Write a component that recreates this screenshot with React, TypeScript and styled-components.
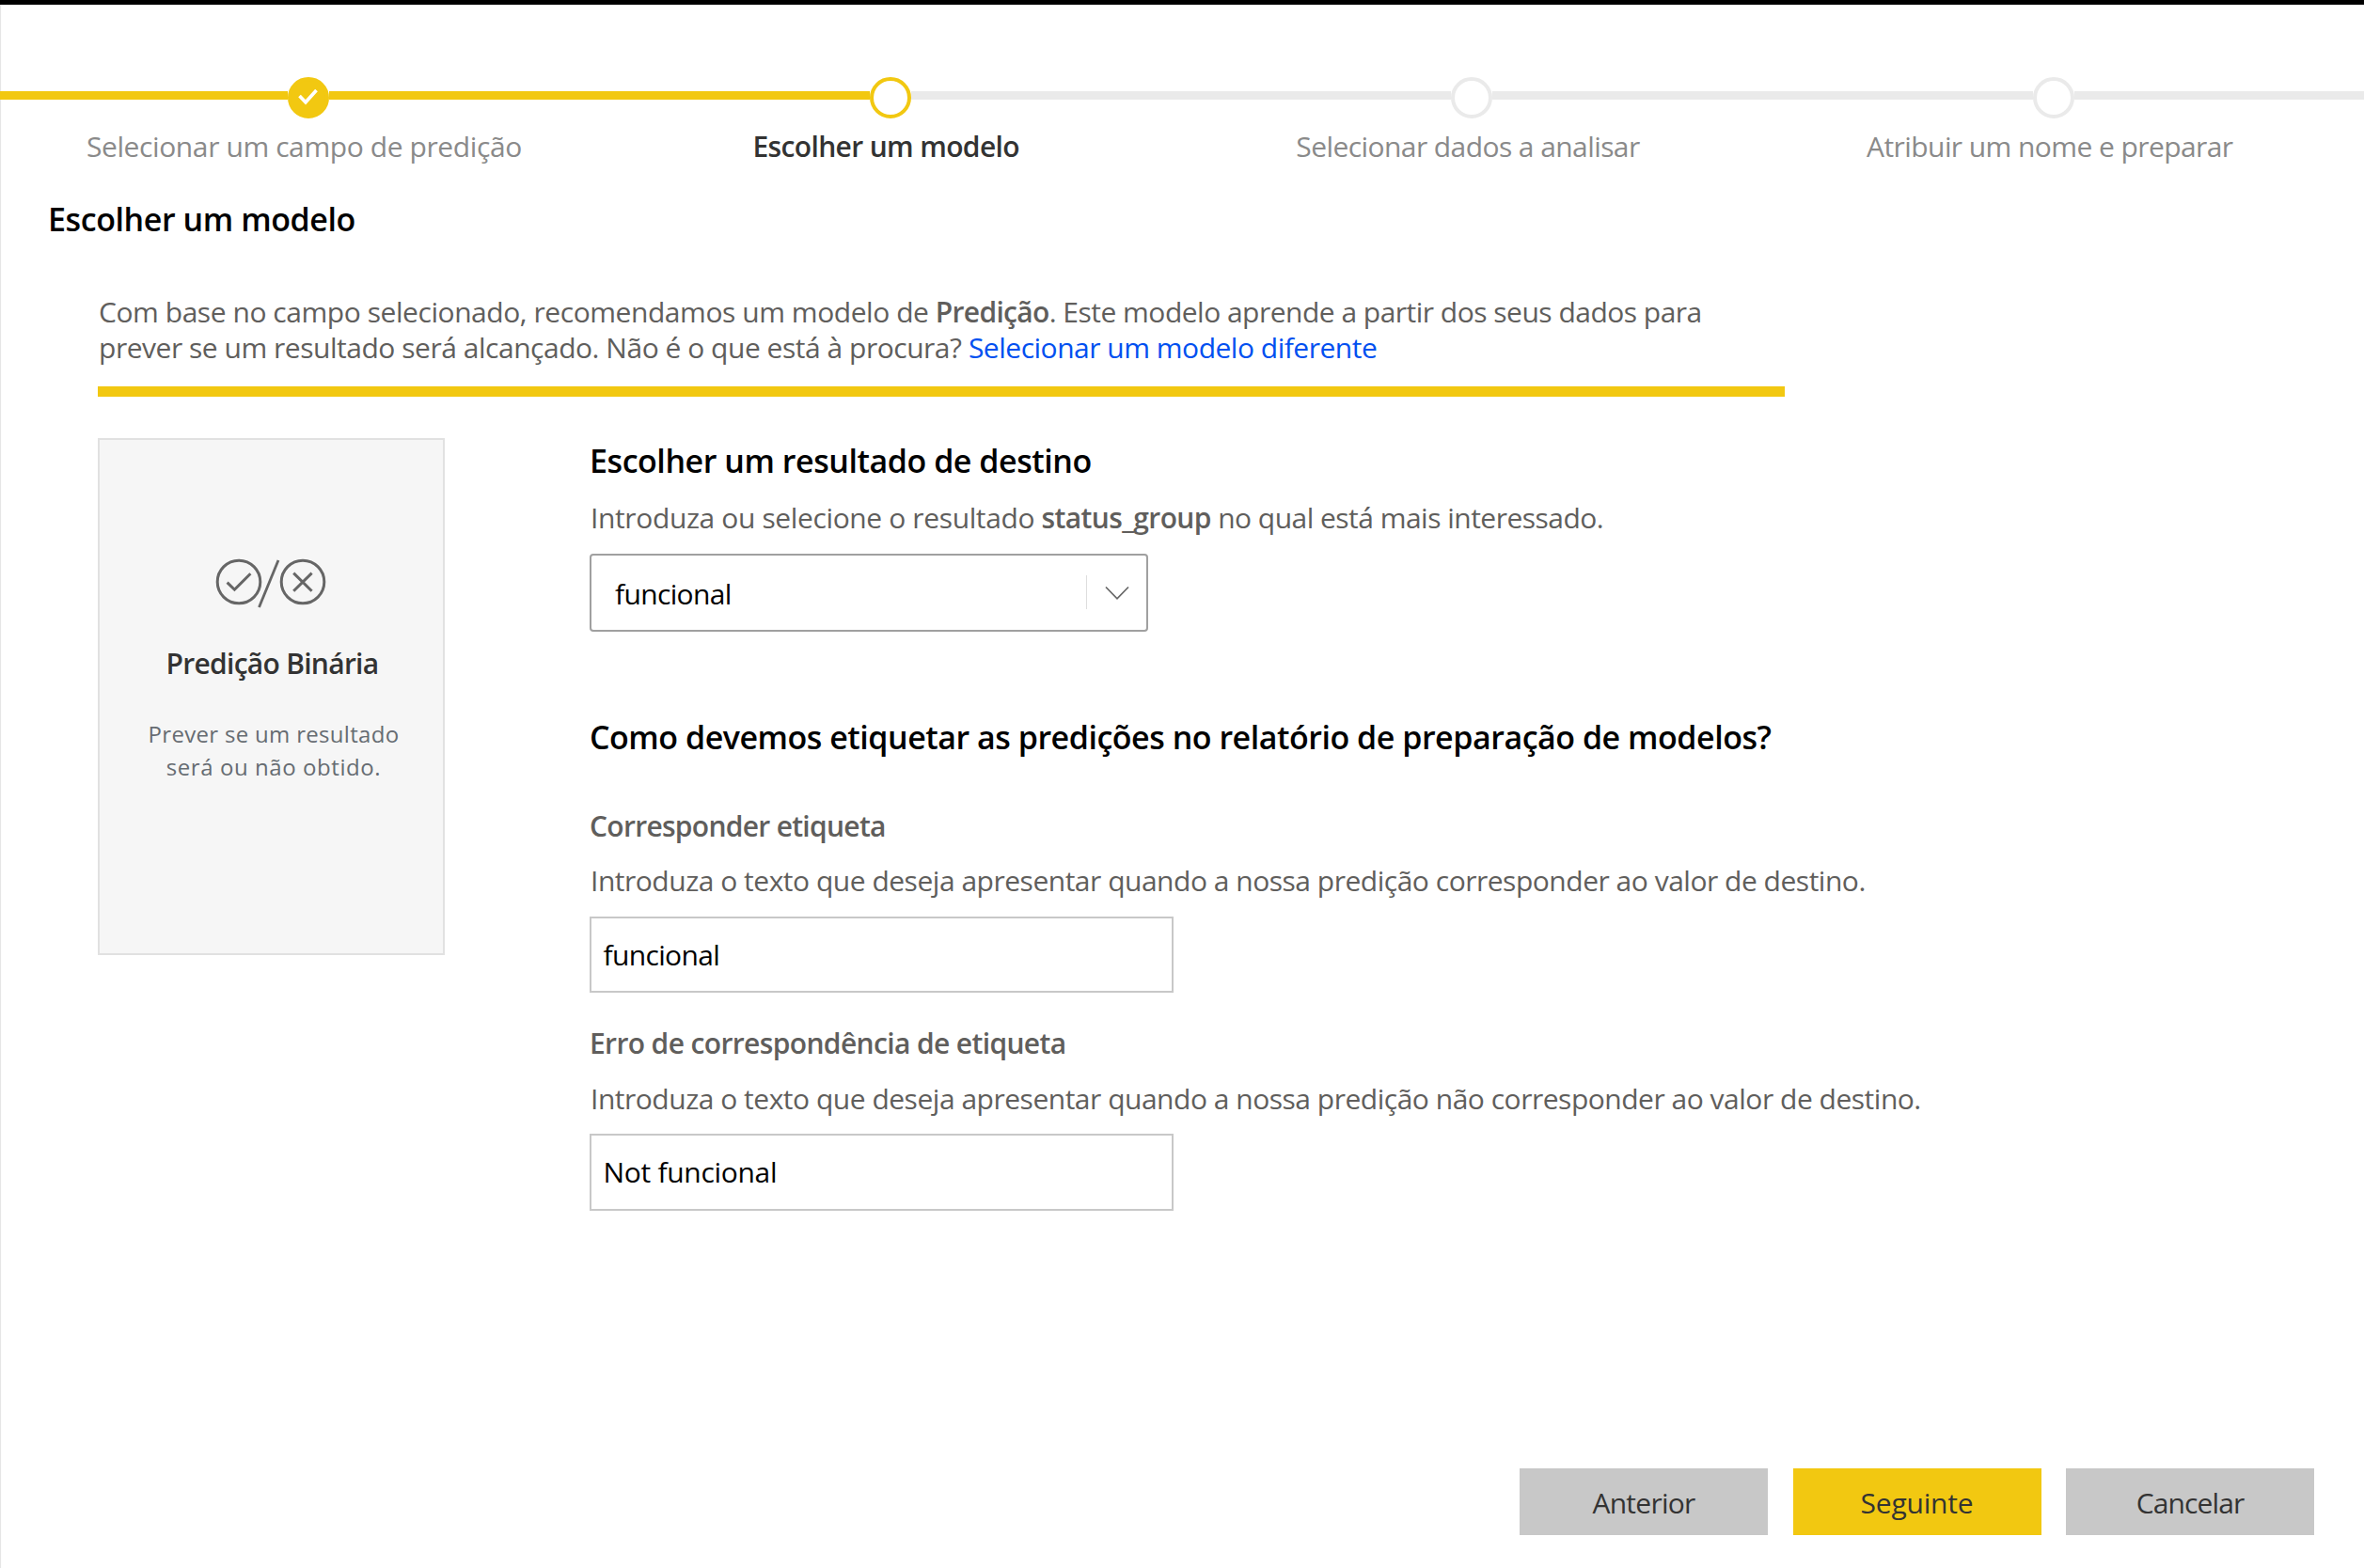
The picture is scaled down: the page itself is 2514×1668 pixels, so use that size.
import React from "react";
import styled, { createGlobalStyle } from "styled-components";

const color = {
  accent: "#f2c811",
  track: "#eaeaea",
  text: "#605e5c",
  strong: "#333333",
  muted: "#8a8a8a",
  link: "#0050f0",
  button: "#c8c8c8",
};

const GlobalStyle = createGlobalStyle`
  *, *::before, *::after { box-sizing: border-box; }
  body {
    margin: 0;
    background: #ffffff;
    font-family: "Open Sans", "Noto Sans", sans-serif;
  }
  h1, h2, h3, p { margin: 0; }
`;

type Tracked = { $track?: number };

const Page = styled.div`
  display: flex;
  flex-direction: column;
  width: 2514px;
  height: 1668px;
  border-top: 5px solid #000000;
  background: #ffffff;
  box-shadow: inset 2px 0 1px -1px #e4e4e4;
`;

const Stepper = styled.nav`
  padding-top: 77px;
`;

const StepTrack = styled.div`
  display: flex;
  align-items: center;
  height: 44px;
`;

const StepLine = styled.span<{ $done?: boolean; $width?: number }>`
  flex: ${(p) => (p.$width ? `0 0 ${p.$width}px` : "1 1 0")};
  height: 9px;
  margin-bottom: 5px;
  background: ${(p) => (p.$done ? color.accent : color.track)};
`;

const StepDot = styled.span<{ $state: StepState }>`
  display: flex;
  align-items: center;
  justify-content: center;
  flex: 0 0 44px;
  height: 44px;
  border-radius: 50%;
  border: 4px solid ${(p) => (p.$state === "todo" ? color.track : color.accent)};
  background: ${(p) => (p.$state === "done" ? color.accent : "#ffffff")};
`;

const StepLabels = styled.div`
  display: grid;
  grid-template-columns: repeat(4, 618.8px);
  margin: 10px 0 0 14px;
`;

const StepLabel = styled.span<Tracked & { $current: boolean }>`
  font-size: 30px;
  line-height: 40px;
  text-align: center;
  font-weight: ${(p) => (p.$current ? 600 : 400)};
  color: ${(p) => (p.$current ? color.strong : color.muted)};
  letter-spacing: ${(p) => p.$track ?? 0}px;
`;

const Title = styled.h1`
  margin: 33px 0 0 51px;
  font-size: 34px;
  font-weight: 600;
  line-height: 48px;
  letter-spacing: -0.42px;
  color: #000000;
`;

const Intro = styled.section`
  width: 1794px;
  margin: 56px 0 0 104px;
  padding-bottom: 22px;
  border-bottom: 11px solid ${color.accent};
`;

const IntroLine = styled.p<Tracked>`
  padding-left: 1px;
  font-size: 30px;
  line-height: 38px;
  letter-spacing: ${(p) => p.$track ?? 0}px;
  color: ${color.text};
  white-space: nowrap;
`;

const Run = styled.span<Tracked>`
  letter-spacing: ${(p) => p.$track ?? 0}px;
`;

const Strong = styled.strong<Tracked>`
  font-weight: 600;
  letter-spacing: ${(p) => p.$track ?? 0}px;
`;

const Link = styled.a<Tracked>`
  color: ${color.link};
  text-decoration: none;
  letter-spacing: ${(p) => p.$track ?? 0}px;
`;

const Content = styled.main`
  display: flex;
  align-items: flex-start;
  gap: 154px;
  margin: 44px 0 0 104px;
`;

const ModelCard = styled.aside`
  display: flex;
  flex-direction: column;
  align-items: center;
  width: 369px;
  height: 550px;
  padding: 126px 0 0;
  border: 2px solid #e1e1e1;
  background: #f6f6f6;
`;

const CardGlyph = styled.svg`
  flex: none;
  margin-right: 2px;
`;

const CardTitle = styled.h3`
  margin-top: 38px;
  padding-left: 2px;
  font-size: 30px;
  font-weight: 600;
  line-height: 40px;
  letter-spacing: -0.72px;
  color: ${color.strong};
`;

const CardText = styled.p`
  display: flex;
  flex-direction: column;
  align-items: center;
  margin-top: 37px;
  padding-left: 5px;
  font-size: 24px;
  line-height: 35px;
  color: #666c72;
`;

const Form = styled.section`
  display: flex;
  flex-direction: column;
  align-items: flex-start;
`;

const Heading = styled.h2<Tracked & { $top?: number }>`
  margin-top: ${(p) => p.$top ?? 0}px;
  font-size: 34px;
  font-weight: 600;
  line-height: 48px;
  letter-spacing: ${(p) => p.$track ?? 0}px;
  color: #000000;
  white-space: nowrap;
`;

const Hint = styled.p<Tracked & { $top: number }>`
  margin-top: ${(p) => p.$top}px;
  padding-left: 1px;
  font-size: 30px;
  line-height: 40px;
  letter-spacing: ${(p) => p.$track ?? 0}px;
  color: ${color.text};
  white-space: nowrap;
`;

const FieldLabel = styled.h3<Tracked & { $top: number }>`
  margin-top: ${(p) => p.$top}px;
  font-size: 30px;
  font-weight: 600;
  line-height: 40px;
  letter-spacing: ${(p) => p.$track ?? 0}px;
  color: ${color.text};
`;

const Select = styled.div`
  display: flex;
  align-items: center;
  width: 594px;
  height: 83px;
  margin-top: 18px;
  padding: 0 18px 0 25px;
  border: 2px solid #a0a0a0;
  border-radius: 4px;
`;

const SelectValue = styled.span`
  flex: 1;
  padding-top: 3px;
  font-size: 30px;
  line-height: 40px;
  letter-spacing: -0.65px;
  color: #000000;
`;

const SelectDivider = styled.span`
  width: 1px;
  height: 36px;
  margin: 0 19px 1px 0;
  background: #dedede;
`;

const TextBox = styled.div<Tracked & { $height: number; $top: number }>`
  display: flex;
  align-items: center;
  width: 621px;
  height: ${(p) => p.$height}px;
  margin-top: ${(p) => p.$top}px;
  padding: 0 12.5px;
  border: 2px solid ${color.button};
  font-size: 30px;
  line-height: 40px;
  letter-spacing: ${(p) => p.$track ?? 0}px;
  color: #000000;
`;

const Footer = styled.footer`
  display: flex;
  justify-content: flex-end;
  gap: 26.5px;
  margin-top: auto;
  padding: 0 53px 35px 0;
`;

const Button = styled.button<Tracked & { $primary?: boolean }>`
  width: 264px;
  height: 71px;
  padding: 2px 0 0;
  border: 0;
  background: ${(p) => (p.$primary ? color.accent : color.button)};
  font-family: inherit;
  font-size: 30px;
  line-height: 40px;
  letter-spacing: ${(p) => p.$track ?? 0}px;
  color: ${color.strong};
`;

type StepState = "done" | "current" | "todo";

const steps: { label: string; state: StepState; track: number; lead?: number }[] = [
  { label: "Selecionar um campo de predição", state: "done", track: -0.4, lead: 306 },
  { label: "Escolher um modelo", state: "current", track: -0.64, lead: 575 },
  { label: "Selecionar dados a analisar", state: "todo", track: -0.58, lead: 574 },
  { label: "Atribuir um nome e preparar", state: "todo", track: -0.58, lead: 575 },
];

const CheckGlyph = () => (
  <svg width="24" height="24" viewBox="0 0 24 24" fill="none">
    <path d="M2.5 10 L9 16.8 L20.5 4" stroke="#ffffff" strokeWidth="3.6" />
  </svg>
);

const BinaryGlyph = () => (
  <CardGlyph width="122" height="54" viewBox="0 0 122 54" fill="none" stroke="#666666" strokeWidth="3">
    <circle cx="27" cy="25" r="22.8" />
    <circle cx="95" cy="25" r="22.8" />
    <path d="M14.6 25.6 L22.4 33.2 L39.4 16.2" />
    <path d="M69 2 L48.5 52" strokeWidth="2.8" />
    <path d="M85.2 15.6 L104.6 34.8 M104.6 15.6 L85.2 34.8" />
  </CardGlyph>
);

const ChevronGlyph = () => (
  <svg width="26" height="16" viewBox="0 0 26 16" fill="none">
    <path d="M1 1.5 L13 13.8 L25 1.5" stroke="#666666" strokeWidth="1.7" />
  </svg>
);

export default function App() {
  return (
    <>
      <GlobalStyle />
      <Page>
        <Stepper>
          <StepTrack>
            {steps.map((s) => (
              <React.Fragment key={s.label}>
                <StepLine $done={s.state !== "todo"} $width={s.lead} />
                <StepDot $state={s.state}>{s.state === "done" && <CheckGlyph />}</StepDot>
              </React.Fragment>
            ))}
            <StepLine />
          </StepTrack>
          <StepLabels>
            {steps.map((s) => (
              <StepLabel key={s.label} $current={s.state === "current"} $track={s.track}>
                {s.label}
              </StepLabel>
            ))}
          </StepLabels>
        </Stepper>

        <Title>Escolher um modelo</Title>

        <Intro>
          <IntroLine $track={-0.51}>
            <Run $track={-0.445}>Com base no campo selecionado, recomendamos um modelo de </Run>
            <Strong $track={-0.68}>Predição</Strong>. Este modelo aprende a partir dos seus dados para
          </IntroLine>
          <IntroLine $track={-0.475}>
            prever se um resultado será alcançado. Não é o que está à procura?{" "}
            <Link $track={-0.49}>Selecionar um modelo diferente</Link>
          </IntroLine>
        </Intro>

        <Content>
          <ModelCard>
            <BinaryGlyph />
            <CardTitle>Predição Binária</CardTitle>
            <CardText>
              <Run $track={0.31}>Prever se um resultado</Run>
              <Run $track={0.57}>será ou não obtido.</Run>
            </CardText>
          </ModelCard>

          <Form>
            <Heading $track={-0.45}>Escolher um resultado de destino</Heading>
            <Hint $track={-0.52} $top={17}>
              <Run $track={-0.375}>Introduza ou selecione o resultado </Run>
              <Strong $track={-0.62}>status_group</Strong> no qual está mais interessado.
            </Hint>
            <Select>
              <SelectValue>funcional</SelectValue>
              <SelectDivider />
              <ChevronGlyph />
            </Select>

            <Heading $track={-0.475} $top={88}>
              Como devemos etiquetar as predições no relatório de preparação de modelos?
            </Heading>

            <FieldLabel $track={-0.71} $top={51}>Corresponder etiqueta</FieldLabel>
            <Hint $track={-0.485} $top={18}>
              Introduza o texto que deseja apresentar quando a nossa predição corresponder ao valor de destino.
            </Hint>
            <TextBox $track={-0.65} $height={81} $top={18}>funcional</TextBox>

            <FieldLabel $track={-0.63} $top={34}>Erro de correspondência de etiqueta</FieldLabel>
            <Hint $track={-0.485} $top={19}>
              Introduza o texto que deseja apresentar quando a nossa predição não corresponder ao valor de destino.
            </Hint>
            <TextBox $track={-0.3} $height={82} $top={17}>Not funcional</TextBox>
          </Form>
        </Content>

        <Footer>
          <Button $track={-0.75}>Anterior</Button>
          <Button $track={-0.19} $primary>Seguinte</Button>
          <Button $track={-0.88}>Cancelar</Button>
        </Footer>
      </Page>
    </>
  );
}
